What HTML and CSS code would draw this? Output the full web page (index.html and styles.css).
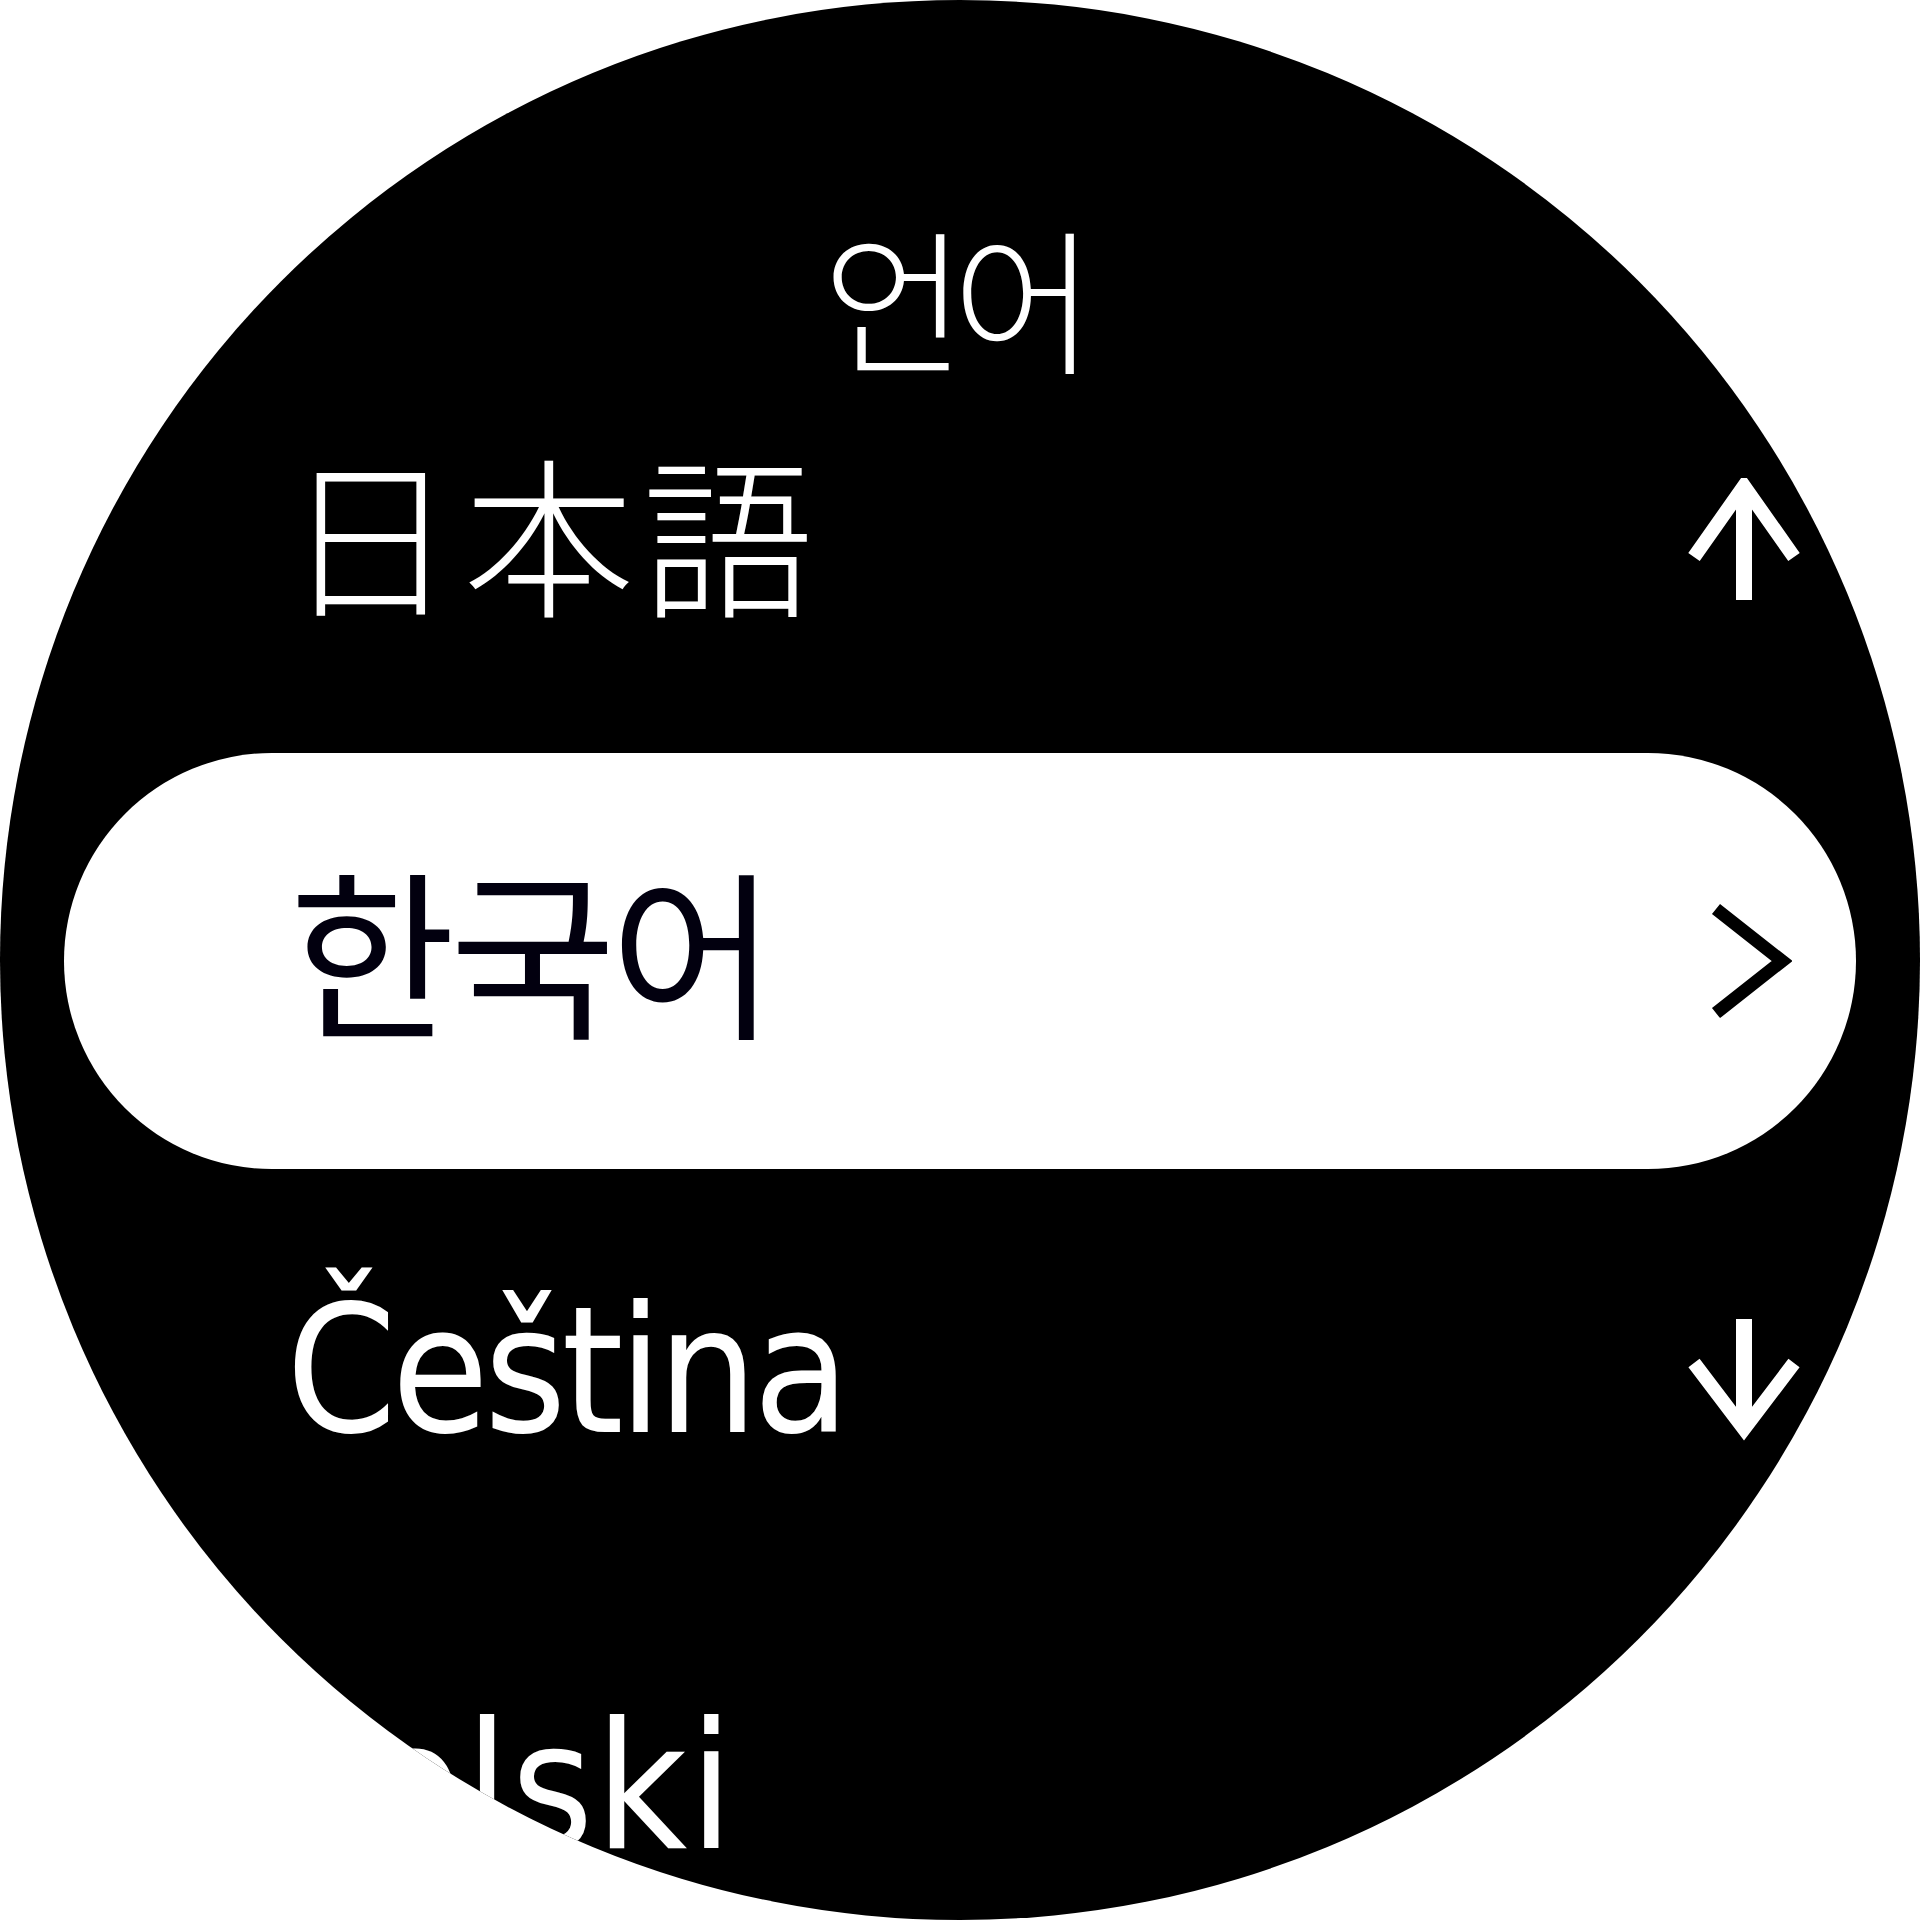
FILE: index.html
```html
<!DOCTYPE html>
<html lang="ko">
<head>
<meta charset="utf-8">
<title>언어</title>
<link rel="stylesheet" href="styles.css">
</head>
<body>
<div class="watch">
  <header class="title">언어</header>
  <ul class="list">
    <li class="row">
      <span class="label cjk-jp">日本語</span>
      <svg class="icon arrow up" width="112" height="130" viewBox="0 0 112 130" aria-hidden="true">
        <path d="M56 10 V122" stroke="#fff" stroke-width="16" fill="none"/>
        <path d="M6 79 L56 8 L106 79" stroke="#fff" stroke-width="14" fill="none" stroke-linejoin="miter"/>
      </svg>
    </li>
    <li class="row selected">
      <span class="label cjk-kr">한국어</span>
      <svg class="icon chevron" width="84" height="116" viewBox="0 0 84 116" aria-hidden="true">
        <path d="M8 6 L74 58 L8 110" stroke="#000" stroke-width="13" fill="none" stroke-linejoin="miter"/>
      </svg>
    </li>
    <li class="row">
      <span class="label latin">Čeština</span>
      <svg class="icon arrow down" width="112" height="130" viewBox="0 0 112 130" aria-hidden="true">
        <path d="M56 8 V116" stroke="#fff" stroke-width="16" fill="none"/>
        <path d="M6 52 L56 118 L106 52" stroke="#fff" stroke-width="14" fill="none" stroke-linejoin="miter"/>
      </svg>
    </li>
    <li class="row peek">
      <span class="label latin">Polski</span>
    </li>
  </ul>
</div>
</body>
</html>
```
FILE: styles.css
```css
html, body {
  margin: 0;
  padding: 0;
  background: #fff;
}

.watch {
  width: 1920px;
  height: 1920px;
  border-radius: 50%;
  background: #000;
  overflow: hidden;
  display: flex;
  flex-direction: column;
  color: #fff;
}

.title {
  height: 337px;
  box-sizing: border-box;
  padding: 216px 16px 0 0;
  text-align: center;
  font-family: "Noto Sans CJK KR", sans-serif;
  font-weight: 300;
  font-size: 156px;
  line-height: 1;
  letter-spacing: -14px;
}

.list {
  list-style: none;
  margin: 0;
  padding: 0;
}

.row {
  height: 416px;
  margin: 0 64px;
  padding: 0 56px 0 232px;
  box-sizing: border-box;
  display: flex;
  align-items: center;
  justify-content: space-between;
  border-radius: 208px;
}

.row.selected {
  background: #fff;
  color: #02000f;
}

.label {
  line-height: 1;
  white-space: nowrap;
}

.cjk-jp {
  font-family: "Noto Sans CJK JP", sans-serif;
  font-weight: 300;
  font-size: 172px;
  letter-spacing: 7px;
  margin-left: -12px;
  margin-bottom: 32px;
}

.cjk-kr {
  font-family: "Noto Sans CJK KR", sans-serif;
  font-weight: 400;
  font-size: 181px;
  letter-spacing: -6px;
  margin-left: -7px;
  margin-bottom: 30px;
}

.latin {
  font-family: "DejaVu Sans Condensed", "DejaVu Sans", sans-serif;
  font-size: 176px;
  letter-spacing: -5px;
  margin-left: -10px;
  margin-bottom: 10px;
}

.row.peek .latin {
  letter-spacing: 2px;
  margin-left: -21px;
}

.icon {
  flex: none;
  display: block;
}

.arrow.up {
  margin-bottom: 4px;
}

.arrow.down {
  margin-bottom: 2px;
}

.chevron {
  margin-right: 8px;
}
```
